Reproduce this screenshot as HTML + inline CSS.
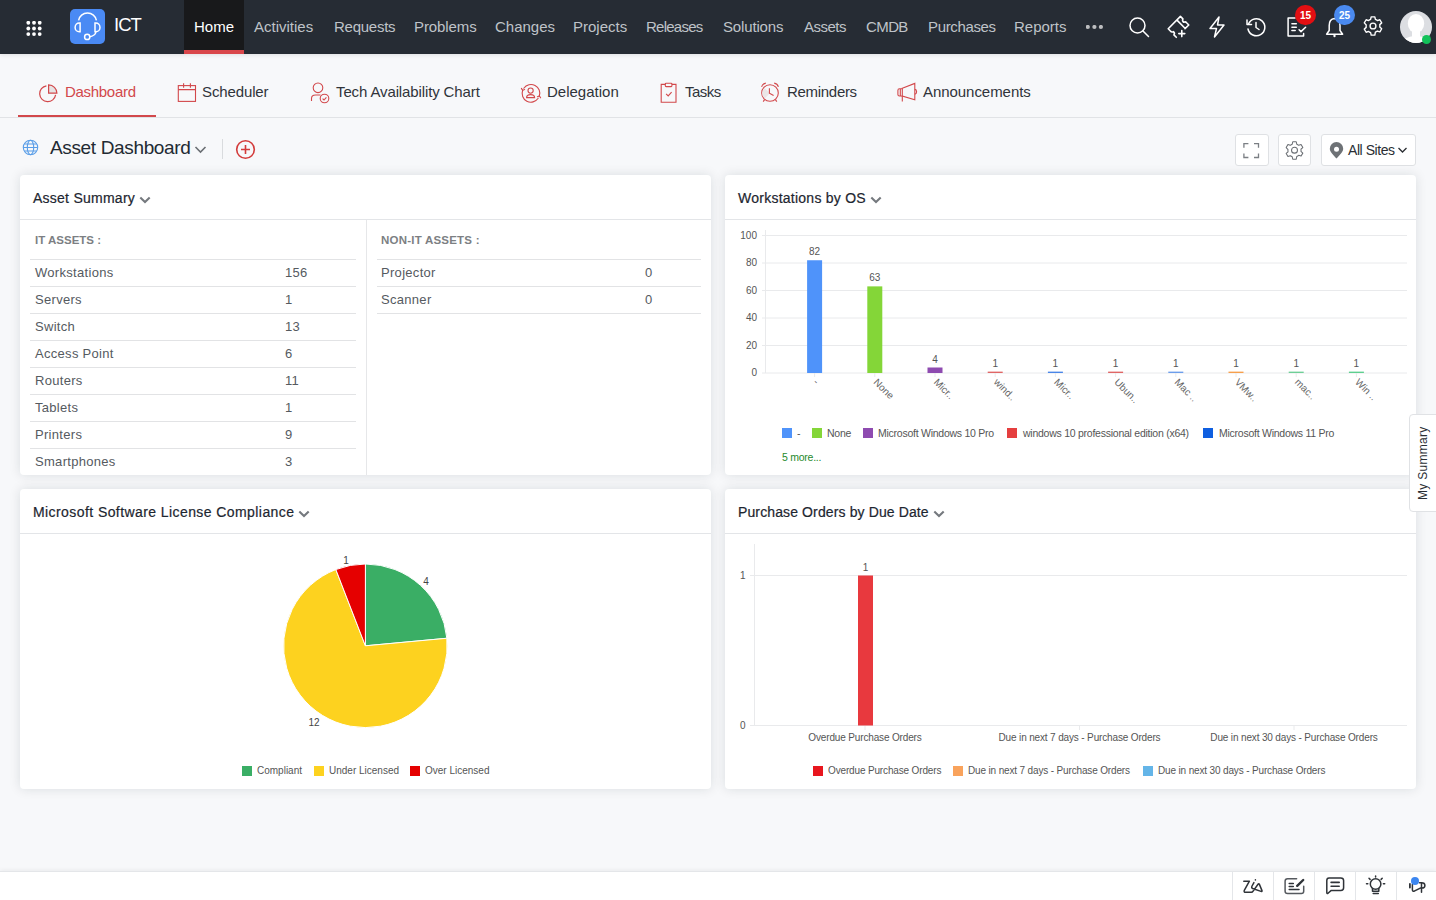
<!DOCTYPE html>
<html><head><meta charset="utf-8">
<style>
*{margin:0;padding:0;box-sizing:border-box}
html,body{width:1436px;height:900px;overflow:hidden;background:#f7f8fa;font-family:"Liberation Sans",sans-serif;position:relative}
.a{position:absolute;white-space:nowrap}
#top{position:absolute;left:0;top:0;width:1436px;height:54px;background:#262c34;box-shadow:0 1px 4px rgba(0,0,0,.10);z-index:2}
.nav{position:absolute;top:18px;font-size:15px;color:#bfc3c8;line-height:18px}
#home{position:absolute;left:184px;top:0;width:60px;height:54px;background:#18191b}
#home .bar{position:absolute;left:0;bottom:0;width:60px;height:4px;background:#d9474b}
.tab{position:absolute;top:83px;font-size:15px;color:#30343a;line-height:18px}
.card{position:absolute;background:#fff;border-radius:4px;box-shadow:0 0 12px rgba(20,30,40,.12)}
.card .hd{position:absolute;left:0;top:44px;width:100%;height:1px;background:#e3e5e8}
.ct{position:absolute;left:13px;top:15px;font-size:14px;color:#1d2630;line-height:16px;font-weight:normal;-webkit-text-stroke:0.2px #1d2630;letter-spacing:0.25px}
.row{position:absolute;font-size:13px;color:#555a5f;line-height:15px;letter-spacing:0.3px}
.ln{position:absolute;height:1px;background:#e2e3e5}
.ax{position:absolute;font-size:10px;color:#555;line-height:11px}
.lg{position:absolute;font-size:10px;color:#555;line-height:12px}
.lg2{position:absolute;font-size:10.5px;color:#555;line-height:12px;letter-spacing:-0.25px}
.sq{position:absolute;width:10px;height:10px}
</style></head><body>
<div id="top">
  <svg class="a" style="left:26px;top:21px" width="16" height="16" viewBox="0 0 16 16" fill="#fff"><circle cx="2.3" cy="1.8" r="1.9"/><circle cx="8" cy="1.8" r="1.9"/><circle cx="13.7" cy="1.8" r="1.9"/><circle cx="2.3" cy="7.5" r="1.9"/><circle cx="8" cy="7.5" r="1.9"/><circle cx="13.7" cy="7.5" r="1.9"/><circle cx="2.3" cy="13.1" r="1.9"/><circle cx="8" cy="13.1" r="1.9"/><circle cx="13.7" cy="13.1" r="1.9"/></svg>
  <div class="a" style="left:70px;top:9px;width:35px;height:35px;background:#4a8af4;border-radius:5px"></div>
  <svg class="a" style="left:70px;top:9px" width="35" height="35" viewBox="0 0 35 35" fill="none" stroke="#fff" stroke-width="1.5">
    <path d="M8.6 11.3 A9 8.6 0 0 1 26.4 11.3"/>
    <path d="M10.1 14.1 H9.3 a4.2 4.3 0 0 0 0 8.6 H10.1 Z"/>
    <path d="M25 14.1 H25.8 a4.2 4.3 0 0 1 0 8.6 H25 Z"/>
    <path d="M26 22.5 Q25.5 26.6 19.8 27.8"/>
    <circle cx="17.2" cy="27.9" r="2.6"/>
  </svg>
  <div class="a" style="left:114px;top:14px;font-size:18.5px;color:#fff;line-height:22px;letter-spacing:-1px">ICT</div>
  <div id="home"><div class="bar"></div></div>
  <div class="nav" style="left:194px;color:#fff">Home</div>
  <div class="nav" style="left:254px">Activities</div>
  <div class="nav" style="left:334px;letter-spacing:-0.25px">Requests</div>
  <div class="nav" style="left:414px;letter-spacing:-0.1px">Problems</div>
  <div class="nav" style="left:495px">Changes</div>
  <div class="nav" style="left:573px">Projects</div>
  <div class="nav" style="left:646px;letter-spacing:-0.75px">Releases</div>
  <div class="nav" style="left:723px;letter-spacing:-0.15px">Solutions</div>
  <div class="nav" style="left:804px;letter-spacing:-0.5px">Assets</div>
  <div class="nav" style="left:866px;letter-spacing:-0.6px">CMDB</div>
  <div class="nav" style="left:928px;letter-spacing:-0.35px">Purchases</div>
  <div class="nav" style="left:1014px">Reports</div>
  <svg class="a" style="left:1086px;top:25px" width="18" height="5" viewBox="0 0 18 5" fill="#bcbdbf"><circle cx="1.8" cy="2" r="2.1"/><circle cx="8.4" cy="2" r="2.1"/><circle cx="14.9" cy="2" r="2.1"/></svg>
  <!-- icons -->
  <svg class="a" style="left:1128px;top:16px" width="22" height="22" viewBox="0 0 22 22" fill="none" stroke="#fff" stroke-width="1.5" stroke-linecap="round"><circle cx="9.5" cy="9.5" r="7.5"/><path d="M15 15 L20.5 20.5"/></svg>
  <svg class="a" style="left:1160px;top:8px" width="40" height="36" viewBox="0 0 40 36" fill="none" stroke="#fff" stroke-width="1.6" stroke-linejoin="round" stroke-linecap="round"><path d="M16.3 29.3 L13.9 26.9 Q15.2 25 13.4 23.6 Q11.6 24.6 10.4 23 L8.2 20.8 L20.4 8.4 L22.9 10.9 Q21.9 12.9 23.7 14.3 Q25.5 13.3 26.6 14.8 L28.8 17 L25 20.6 M17.2 12.4 L25 20.2 M18.8 25.6 H24.8 M21.8 22.6 V28.6"/></svg>
  <svg class="a" style="left:1208px;top:16px" width="18" height="22" viewBox="0 0 18 22" fill="none" stroke="#fff" stroke-width="1.5" stroke-linejoin="round"><path d="M11 1 L2 12.5 H8.5 L6.5 21 L16 9 H9.5 Z"/></svg>
  <svg class="a" style="left:1245px;top:16px" width="22" height="22" viewBox="0 0 22 22" fill="none" stroke="#fff" stroke-width="1.5" stroke-linecap="round" stroke-linejoin="round"><path d="M3.5 8 A8.5 8.5 0 1 1 3 13"/><path d="M2 4 v4.5 h4.5"/><path d="M11 6.5 V11.5 L14 13.5"/></svg>
  <svg class="a" style="left:1286px;top:16px" width="22" height="22" viewBox="0 0 22 22" fill="none" stroke="#fff" stroke-width="1.5" stroke-linecap="round" stroke-linejoin="round"><path d="M9 2 H2.1 V20 H17.6 V17.6"/><path d="M5.9 7.8 H10.3 M5.9 11.2 H10.3 M5.9 14.5 H9.2"/><path d="M13.1 13.8 L15 15.6 L19.6 11.2"/></svg>
  <div class="a" style="left:1295px;top:5px;width:21px;height:20px;border-radius:10px;background:#e30f12;color:#fff;font-size:10px;font-weight:bold;text-align:center;line-height:22px">15</div>
  <svg class="a" style="left:1325px;top:16px" width="20" height="23" viewBox="0 0 20 23" fill="none" stroke="#fff" stroke-width="1.5" stroke-linecap="round" stroke-linejoin="round"><path d="M9.5 2.5 Q4.2 3 4.2 9.5 V14.5 L1.6 18.2 H17.6 L15 14.5 V9.5 Q15 3 9.5 2.5"/><path d="M9.5 19.6 V20.2" stroke-width="2.2"/></svg>
  <div class="a" style="left:1334px;top:5px;width:21px;height:20px;border-radius:10px;background:#4a8af0;color:#fff;font-size:10px;font-weight:bold;text-align:center;line-height:22px">25</div>
  <svg class="a" style="left:1362px;top:15px" width="22" height="22" viewBox="0 0 24 24" fill="none" stroke="#fff" stroke-width="1.5" stroke-linejoin="round"><circle cx="12" cy="12" r="3.2"/><path d="M10 2 h4 l.6 2.8 a8 8 0 0 1 2.2 1.3 l2.7-.9 2 3.4-2.1 1.9 a8 8 0 0 1 0 2.6 l2.1 1.9-2 3.4-2.7-.9 a8 8 0 0 1-2.2 1.3 L14 22 h-4 l-.6-2.8 a8 8 0 0 1-2.2-1.3 l-2.7.9-2-3.4 2.1-1.9 a8 8 0 0 1 0-2.6 L2.5 8.6l2-3.4 2.7.9 a8 8 0 0 1 2.2-1.3 Z"/></svg>
  <svg class="a" style="left:1400px;top:11px" width="32" height="32" viewBox="0 0 32 32"><defs><clipPath id="av"><circle cx="16" cy="16" r="16"/></clipPath></defs><g clip-path="url(#av)"><rect width="32" height="32" fill="#dcdee2"/><ellipse cx="16" cy="12.5" rx="8.2" ry="9.5" fill="#fff"/><rect x="12" y="18" width="8" height="8" fill="#fff"/><ellipse cx="16" cy="35" rx="16" ry="10" fill="#fff"/></g></svg>
  <div class="a" style="left:1422px;top:35px;width:9px;height:9px;border-radius:5px;background:#12c25a"></div>
</div>

<!-- sub tabs -->
<div class="a" style="left:0;top:117px;width:1436px;height:1px;background:#e1e3e6"></div>
<div class="a" style="left:18px;top:115px;width:138px;height:2px;background:#d2484b"></div>
<svg class="a" style="left:39px;top:84px" width="20" height="20" viewBox="0 0 20 20" fill="none" stroke="#d2484b" stroke-width="1.2"><path d="M7.4 1.8 A8 8 0 1 0 16.6 10.9"/><path d="M9.6 0.9 V9.2 H17.9 A8.3 8.3 0 0 0 9.6 0.9 Z" fill="#e6e3e3"/></svg>
<div class="tab" style="left:65px;color:#d2484b;letter-spacing:-0.3px">Dashboard</div>
<svg class="a" style="left:177px;top:83px" width="20" height="20" viewBox="0 0 20 20" fill="none" stroke="#d2484b" stroke-width="1.1"><rect x="1.3" y="2.6" width="17.2" height="15.8"/><path d="M1.3 6.6 H18.5 M6.6 0.3 V4.8 M13.4 0.3 V4.8"/></svg>
<div class="tab" style="left:202px;letter-spacing:-0.12px">Scheduler</div>
<svg class="a" style="left:309px;top:81px" width="22" height="24" viewBox="0 0 22 24" fill="none" stroke="#d2484b" stroke-width="1.1"><circle cx="9" cy="6.8" r="4.8"/><path d="M2.5 20 V17.5 Q2.5 14 6.5 14 H11.5"/><circle cx="15.5" cy="17.5" r="4.3"/><path d="M13.6 17.6 L15 19 L17.4 16.3"/></svg>
<div class="tab" style="left:336px;letter-spacing:-0.12px">Tech Availability Chart</div>
<svg class="a" style="left:519px;top:82px" width="24" height="24" viewBox="0 0 24 24" fill="none" stroke="#d2484b" stroke-width="1.1" stroke-linecap="round"><path d="M4.8 6.2 A8.8 8.8 0 0 1 20.3 14.2"/><path d="M19.2 16.3 A8.8 8.8 0 0 1 3.7 8.2"/><path d="M2.4 6.4 L3.6 8.4 L5.6 7.6 M21.6 15.8 L20.4 14 L18.4 14.8"/><circle cx="11.6" cy="8.6" r="2.6"/><path d="M7.6 15.6 Q7.6 12.6 11.6 12.6 Q15.6 12.6 15.6 15.6 Z"/></svg>
<div class="tab" style="left:547px">Delegation</div>
<svg class="a" style="left:660px;top:82px" width="17" height="22" viewBox="0 0 17 22" fill="none" stroke="#d2484b" stroke-width="1.1"><path d="M5.3 2.4 H1.2 V20.3 H16 V2.4 H11.9"/><rect x="5.3" y="1.2" width="6.6" height="3.4" rx="0.8"/><path d="M6.1 11.9 L8.2 13.9 L11.6 10.2"/></svg>
<div class="tab" style="left:685px;letter-spacing:-0.5px">Tasks</div>
<svg class="a" style="left:759px;top:82px" width="22" height="22" viewBox="0 0 22 22" fill="none" stroke="#d2484b" stroke-width="1.1"><circle cx="11" cy="11" r="8.3" /><path d="M5.8 16.5 A7 7 0 0 1 5.3 6 L11 11 Z" fill="#ebe6e6" stroke="none"/><path d="M10.4 6.3 V11.2 L14.6 13.6 M2.6 4.8 Q3.6 1.6 6.8 1.1 M19.4 4.8 Q18.4 1.6 15.2 1.1 M5.6 17.6 L4.2 19.6 M16.4 17.6 L17.8 19.6"/></svg>
<div class="tab" style="left:787px;letter-spacing:-0.3px">Reminders</div>
<svg class="a" style="left:896px;top:82px" width="22" height="22" viewBox="0 0 22 22" fill="none" stroke="#d2484b" stroke-width="1.1"><path d="M6.3 6.2 L18.8 1.4 V17.8 L6.3 14 Z"/><path d="M6.3 6.8 H3.4 Q1.9 6.8 1.9 8.4 V12.4 Q1.9 14 3.4 14 H6.3 M6.3 14 V19.4 M18.8 7.4 Q20.6 7.6 20.6 9.8 Q20.6 11.8 18.8 12.2 M4.3 7 V13.8"/></svg>
<div class="tab" style="left:923px;letter-spacing:-0.05px">Announcements</div>

<!-- title row -->
<svg class="a" style="left:22px;top:139px" width="17" height="17" viewBox="0 0 17 17" fill="none" stroke="#5a9ee8" stroke-width="1.1"><circle cx="8.5" cy="8.5" r="7.2"/><ellipse cx="8.5" cy="8.5" rx="3.2" ry="7.2"/><path d="M1.3 8.5 H15.7 M2.4 5 H14.6 M2.4 12 H14.6"/></svg>
<div class="a" style="left:50px;top:137px;font-size:19px;color:#222a33;line-height:22px;letter-spacing:-0.35px">Asset Dashboard</div>
<svg class="a" style="left:194px;top:145px" width="13" height="9" viewBox="0 0 13 9" fill="none" stroke="#6b6f74" stroke-width="1.6"><path d="M1.5 2 L6.5 7 L11.5 2"/></svg>
<div class="a" style="left:222px;top:139px;width:1px;height:20px;background:#d9dbde"></div>
<svg class="a" style="left:235px;top:139px" width="21" height="21" viewBox="0 0 21 21" fill="none" stroke="#d33b3b" stroke-width="1.6"><circle cx="10.5" cy="10.5" r="8.8"/><path d="M10.5 6 V15 M6 10.5 H15"/></svg>

<div class="a" style="left:1235px;top:134px;width:34px;height:32px;background:#fff;border:1px solid #dfe1e4;border-radius:3px"></div>
<svg class="a" style="left:1242px;top:142px" width="18" height="18" viewBox="0 0 18 18" fill="none" stroke="#7b7f84" stroke-width="1.3"><path d="M1.9 5.7 V1.6 H6.4 M12 1.6 H16.5 V5.7 M16.5 11.4 V15.5 H12 M6.4 15.5 H1.9 V11.4"/></svg>
<div class="a" style="left:1278px;top:134px;width:33px;height:32px;background:#fff;border:1px solid #dfe1e4;border-radius:3px"></div>
<svg class="a" style="left:1284px;top:140px" width="21" height="21" viewBox="0 0 24 24" fill="none" stroke="#6a6e73" stroke-width="1.2" stroke-linejoin="round"><circle cx="12" cy="11.6" r="3.4"/><path d="M10 2 h4 l.6 2.8 a8 8 0 0 1 2.2 1.3 l2.7-.9 2 3.4-2.1 1.9 a8 8 0 0 1 0 2.6 l2.1 1.9-2 3.4-2.7-.9 a8 8 0 0 1-2.2 1.3 L14 22 h-4 l-.6-2.8 a8 8 0 0 1-2.2-1.3 l-2.7.9-2-3.4 2.1-1.9 a8 8 0 0 1 0-2.6 L2.5 8.6l2-3.4 2.7.9 a8 8 0 0 1 2.2-1.3 Z"/></svg>
<div class="a" style="left:1321px;top:134px;width:95px;height:32px;background:#fff;border:1px solid #dfe1e4;border-radius:3px"></div>
<svg class="a" style="left:1329px;top:141px" width="15" height="19" viewBox="0 0 15 19"><path d="M7.5 1 A6.7 6.7 0 0 1 14.2 7.7 C14.2 11.2 10 14.5 7.5 17.5 C5 14.5 0.8 11.2 0.8 7.7 A6.7 6.7 0 0 1 7.5 1 Z" fill="#6e7276"/><circle cx="7.5" cy="8.2" r="2.5" fill="#fff"/></svg>
<div class="a" style="left:1348px;top:142px;font-size:14px;color:#2a2e33;line-height:16px;letter-spacing:-0.45px">All Sites</div>
<svg class="a" style="left:1397px;top:146px" width="11" height="8" viewBox="0 0 11 8" fill="none" stroke="#2a2e33" stroke-width="1.3"><path d="M1.5 2 L5.5 6 L9.5 2"/></svg>

<!-- card 1 -->
<div class="card" style="left:20px;top:175px;width:691px;height:300px">
  <div class="hd"></div>
  <div class="ct">Asset Summary</div>
  <svg class="a" style="left:119px;top:21px" width="12" height="8" viewBox="0 0 12 8" fill="none" stroke="#75797e" stroke-width="2.1"><path d="M1.3 1.6 L6 6.1 L10.7 1.6"/></svg>
  <div class="a" style="left:346px;top:45px;width:1px;height:255px;background:#e6e7e9"></div>
</div>
<div class="a" style="left:35px;top:234px;font-size:11.5px;font-weight:bold;color:#7c7f83;line-height:13px">IT ASSETS :</div>
<div class="a" style="left:381px;top:234px;font-size:11.5px;font-weight:bold;color:#7c7f83;line-height:13px;letter-spacing:0.22px">NON-IT ASSETS :</div>
<div class="ln" style="left:30px;top:259px;width:326px"></div>
<div class="row" style="left:35px;top:265px">Workstations</div>
<div class="row" style="left:285px;top:265px">156</div>
<div class="ln" style="left:30px;top:286px;width:326px"></div>
<div class="row" style="left:35px;top:292px">Servers</div>
<div class="row" style="left:285px;top:292px">1</div>
<div class="ln" style="left:30px;top:313px;width:326px"></div>
<div class="row" style="left:35px;top:319px">Switch</div>
<div class="row" style="left:285px;top:319px">13</div>
<div class="ln" style="left:30px;top:340px;width:326px"></div>
<div class="row" style="left:35px;top:346px">Access Point</div>
<div class="row" style="left:285px;top:346px">6</div>
<div class="ln" style="left:30px;top:367px;width:326px"></div>
<div class="row" style="left:35px;top:373px">Routers</div>
<div class="row" style="left:285px;top:373px">11</div>
<div class="ln" style="left:30px;top:394px;width:326px"></div>
<div class="row" style="left:35px;top:400px">Tablets</div>
<div class="row" style="left:285px;top:400px">1</div>
<div class="ln" style="left:30px;top:421px;width:326px"></div>
<div class="row" style="left:35px;top:427px">Printers</div>
<div class="row" style="left:285px;top:427px">9</div>
<div class="ln" style="left:30px;top:448px;width:326px"></div>
<div class="row" style="left:35px;top:454px">Smartphones</div>
<div class="row" style="left:285px;top:454px">3</div>
<div class="ln" style="left:377px;top:259px;width:324px"></div>
<div class="row" style="left:381px;top:265px">Projector</div>
<div class="row" style="left:645px;top:265px">0</div>
<div class="ln" style="left:377px;top:286px;width:324px"></div>
<div class="row" style="left:381px;top:292px">Scanner</div>
<div class="row" style="left:645px;top:292px">0</div>
<div class="ln" style="left:377px;top:313px;width:324px"></div>

<!-- card 2 -->
<div class="card" style="left:725px;top:175px;width:691px;height:300px">
  <div class="hd"></div>
  <div class="ct">Workstations by OS</div>
  <svg class="a" style="left:145px;top:21px" width="12" height="8" viewBox="0 0 12 8" fill="none" stroke="#75797e" stroke-width="2.1"><path d="M1.3 1.6 L6 6.1 L10.7 1.6"/></svg>
</div>
<svg class="a" style="left:725px;top:220px" width="691" height="255" viewBox="725 220 691 255">
<line x1="762" y1="373.0" x2="1407" y2="373.0" stroke="#e9eaec" stroke-width="1"/>
<line x1="762" y1="345.5" x2="1407" y2="345.5" stroke="#e9eaec" stroke-width="1"/>
<line x1="762" y1="318.0" x2="1407" y2="318.0" stroke="#e9eaec" stroke-width="1"/>
<line x1="762" y1="290.5" x2="1407" y2="290.5" stroke="#e9eaec" stroke-width="1"/>
<line x1="762" y1="263.0" x2="1407" y2="263.0" stroke="#e9eaec" stroke-width="1"/>
<line x1="762" y1="235.5" x2="1407" y2="235.5" stroke="#e9eaec" stroke-width="1"/>
<line x1="765.5" y1="230" x2="765.5" y2="373" stroke="#e9eaec" stroke-width="1"/>
<rect x="807.1" y="260.25" width="15" height="112.75" fill="#4f93fa"/>
<text x="814.6" y="255.25" font-size="10" fill="#555" text-anchor="middle" font-family="Liberation Sans">82</text>
<line x1="814.6" y1="373" x2="814.6" y2="377" stroke="#e9eaec"/>
<text x="814.6" y="381" font-size="10" fill="#666" transform="rotate(45 814.6 381)" font-family="Liberation Sans" dominant-baseline="middle">-</text>
<rect x="867.3000000000001" y="286.375" width="15" height="86.625" fill="#84d638"/>
<text x="874.8000000000001" y="281.375" font-size="10" fill="#555" text-anchor="middle" font-family="Liberation Sans">63</text>
<line x1="874.8000000000001" y1="373" x2="874.8000000000001" y2="377" stroke="#e9eaec"/>
<text x="874.8000000000001" y="381" font-size="10" fill="#666" transform="rotate(45 874.8000000000001 381)" font-family="Liberation Sans" dominant-baseline="middle">None</text>
<rect x="927.5" y="367.5" width="15" height="5.5" fill="#8e4bb0"/>
<text x="935.0" y="362.5" font-size="10" fill="#555" text-anchor="middle" font-family="Liberation Sans">4</text>
<line x1="935.0" y1="373" x2="935.0" y2="377" stroke="#e9eaec"/>
<text x="935.0" y="381" font-size="10" fill="#666" transform="rotate(45 935.0 381)" font-family="Liberation Sans" dominant-baseline="middle">Micr..</text>
<rect x="987.7" y="371.625" width="15" height="1.375" fill="#e06666"/>
<text x="995.2" y="366.625" font-size="10" fill="#555" text-anchor="middle" font-family="Liberation Sans">1</text>
<line x1="995.2" y1="373" x2="995.2" y2="377" stroke="#e9eaec"/>
<text x="995.2" y="381" font-size="10" fill="#666" transform="rotate(45 995.2 381)" font-family="Liberation Sans" dominant-baseline="middle">wind..</text>
<rect x="1047.9" y="371.625" width="15" height="1.375" fill="#4a86e8"/>
<text x="1055.4" y="366.625" font-size="10" fill="#555" text-anchor="middle" font-family="Liberation Sans">1</text>
<line x1="1055.4" y1="373" x2="1055.4" y2="377" stroke="#e9eaec"/>
<text x="1055.4" y="381" font-size="10" fill="#666" transform="rotate(45 1055.4 381)" font-family="Liberation Sans" dominant-baseline="middle">Micr..</text>
<rect x="1108.1" y="371.625" width="15" height="1.375" fill="#e06666"/>
<text x="1115.6" y="366.625" font-size="10" fill="#555" text-anchor="middle" font-family="Liberation Sans">1</text>
<line x1="1115.6" y1="373" x2="1115.6" y2="377" stroke="#e9eaec"/>
<text x="1115.6" y="381" font-size="10" fill="#666" transform="rotate(45 1115.6 381)" font-family="Liberation Sans" dominant-baseline="middle">Ubun..</text>
<rect x="1168.3000000000002" y="371.625" width="15" height="1.375" fill="#6d9eeb"/>
<text x="1175.8000000000002" y="366.625" font-size="10" fill="#555" text-anchor="middle" font-family="Liberation Sans">1</text>
<line x1="1175.8000000000002" y1="373" x2="1175.8000000000002" y2="377" stroke="#e9eaec"/>
<text x="1175.8000000000002" y="381" font-size="10" fill="#666" transform="rotate(45 1175.8000000000002 381)" font-family="Liberation Sans" dominant-baseline="middle">Mac ..</text>
<rect x="1228.5" y="371.625" width="15" height="1.375" fill="#f6a04d"/>
<text x="1236.0" y="366.625" font-size="10" fill="#555" text-anchor="middle" font-family="Liberation Sans">1</text>
<line x1="1236.0" y1="373" x2="1236.0" y2="377" stroke="#e9eaec"/>
<text x="1236.0" y="381" font-size="10" fill="#666" transform="rotate(45 1236.0 381)" font-family="Liberation Sans" dominant-baseline="middle">VMw..</text>
<rect x="1288.7" y="371.625" width="15" height="1.375" fill="#6fcf97"/>
<text x="1296.2" y="366.625" font-size="10" fill="#555" text-anchor="middle" font-family="Liberation Sans">1</text>
<line x1="1296.2" y1="373" x2="1296.2" y2="377" stroke="#e9eaec"/>
<text x="1296.2" y="381" font-size="10" fill="#666" transform="rotate(45 1296.2 381)" font-family="Liberation Sans" dominant-baseline="middle">mac..</text>
<rect x="1348.9" y="371.625" width="15" height="1.375" fill="#5ecf8f"/>
<text x="1356.4" y="366.625" font-size="10" fill="#555" text-anchor="middle" font-family="Liberation Sans">1</text>
<line x1="1356.4" y1="373" x2="1356.4" y2="377" stroke="#e9eaec"/>
<text x="1356.4" y="381" font-size="10" fill="#666" transform="rotate(45 1356.4 381)" font-family="Liberation Sans" dominant-baseline="middle">Win ..</text>
</svg>
<div class="ax" style="right:679px;top:367.0px">0</div>
<div class="ax" style="right:679px;top:339.5px">20</div>
<div class="ax" style="right:679px;top:312.0px">40</div>
<div class="ax" style="right:679px;top:284.5px">60</div>
<div class="ax" style="right:679px;top:257.0px">80</div>
<div class="ax" style="right:679px;top:229.5px">100</div>
<div class="sq" style="left:782px;top:428px;background:#4f93fa"></div>
<div class="lg2" style="left:797px;top:427px">-</div>
<div class="sq" style="left:812px;top:428px;background:#84d638"></div>
<div class="lg2" style="left:827px;top:427px">None</div>
<div class="sq" style="left:863px;top:428px;background:#8e4bb0"></div>
<div class="lg2" style="left:878px;top:427px">Microsoft Windows 10 Pro</div>
<div class="sq" style="left:1007px;top:428px;background:#e53f3f"></div>
<div class="lg2" style="left:1023px;top:427px">windows 10 professional edition (x64)</div>
<div class="sq" style="left:1203px;top:428px;background:#0f5fe0"></div>
<div class="lg2" style="left:1219px;top:427px">Microsoft Windows 11 Pro</div>
<div class="lg2" style="left:782px;top:451px;color:#1f8a2c">5 more...</div>

<!-- card 3 -->
<div class="card" style="left:20px;top:489px;width:691px;height:300px">
  <div class="hd"></div>
  <div class="ct" style="letter-spacing:0.42px">Microsoft Software License Compliance</div>
  <svg class="a" style="left:278px;top:21px" width="12" height="8" viewBox="0 0 12 8" fill="none" stroke="#75797e" stroke-width="2.1"><path d="M1.3 1.6 L6 6.1 L10.7 1.6"/></svg>
</div>
<svg class="a" style="left:20px;top:534px" width="691" height="255" viewBox="20 534 691 255">
<path d="M365.4 645.8 L365.40 564.00 A81.8 81.8 0 0 1 446.85 638.25 Z" fill="#3aae65" stroke="#fff" stroke-width="1"/>
<path d="M365.4 645.8 L446.85 638.25 A81.8 81.8 0 1 1 335.85 569.52 Z" fill="#fdd21f" stroke="#fff" stroke-width="1"/>
<path d="M365.4 645.8 L335.85 569.52 A81.8 81.8 0 0 1 365.40 564.00 Z" fill="#e50000" stroke="#fff" stroke-width="1"/>
<text x="426" y="585" font-size="10" fill="#444" text-anchor="middle" font-family="Liberation Sans">4</text>
<text x="346" y="564" font-size="10" fill="#444" text-anchor="middle" font-family="Liberation Sans">1</text>
<text x="314" y="726" font-size="10" fill="#444" text-anchor="middle" font-family="Liberation Sans">12</text>
</svg>
<div class="sq" style="left:242px;top:766px;background:#3aae65"></div>
<div class="lg" style="left:257px;top:765px">Compliant</div>
<div class="sq" style="left:314px;top:766px;background:#fdd21f"></div>
<div class="lg" style="left:329px;top:765px">Under Licensed</div>
<div class="sq" style="left:410px;top:766px;background:#e50000"></div>
<div class="lg" style="left:425px;top:765px">Over Licensed</div>

<!-- card 4 -->
<div class="card" style="left:725px;top:489px;width:691px;height:300px">
  <div class="hd"></div>
  <div class="ct" style="letter-spacing:0.12px">Purchase Orders by Due Date</div>
  <svg class="a" style="left:208px;top:21px" width="12" height="8" viewBox="0 0 12 8" fill="none" stroke="#75797e" stroke-width="2.1"><path d="M1.3 1.6 L6 6.1 L10.7 1.6"/></svg>
</div>
<svg class="a" style="left:725px;top:534px" width="691" height="255" viewBox="725 534 691 255">
<line x1="750" y1="575.5" x2="1407" y2="575.5" stroke="#e9eaec"/>
<line x1="750" y1="725.5" x2="1407" y2="725.5" stroke="#e9eaec"/>
<line x1="754.5" y1="544" x2="754.5" y2="726" stroke="#e9eaec"/>
<rect x="858" y="575.5" width="15" height="150" fill="#e8393e"/>
<text x="865.5" y="571" font-size="10" fill="#555" text-anchor="middle" font-family="Liberation Sans">1</text>
<line x1="865" y1="726" x2="865" y2="730" stroke="#e9eaec"/>
<text x="865" y="741" font-size="10" fill="#555" text-anchor="middle" font-family="Liberation Sans" letter-spacing="-0.15">Overdue Purchase Orders</text>
<line x1="1079.5" y1="726" x2="1079.5" y2="730" stroke="#e9eaec"/>
<text x="1079.5" y="741" font-size="10" fill="#555" text-anchor="middle" font-family="Liberation Sans" letter-spacing="-0.15">Due in next 7 days - Purchase Orders</text>
<line x1="1294" y1="726" x2="1294" y2="730" stroke="#e9eaec"/>
<text x="1294" y="741" font-size="10" fill="#555" text-anchor="middle" font-family="Liberation Sans" letter-spacing="-0.15">Due in next 30 days - Purchase Orders</text>
</svg>
<div class="ax" style="left:740px;top:570px">1</div>
<div class="ax" style="left:740px;top:720px">0</div>
<div class="sq" style="left:813px;top:766px;background:#e8161e"></div>
<div class="lg" style="left:828px;top:765px;letter-spacing:-0.15px">Overdue Purchase Orders</div>
<div class="sq" style="left:953px;top:766px;background:#f9a35c"></div>
<div class="lg" style="left:968px;top:765px;letter-spacing:-0.15px">Due in next 7 days - Purchase Orders</div>
<div class="sq" style="left:1143px;top:766px;background:#64b5e8"></div>
<div class="lg" style="left:1158px;top:765px;letter-spacing:-0.15px">Due in next 30 days - Purchase Orders</div>

<!-- my summary -->
<div class="a" style="left:1409px;top:414px;width:30px;height:98px;background:#fff;border:1px solid #e0e2e5;border-radius:4px 0 0 4px"></div>
<div class="a" style="left:1416px;top:500px;font-size:12px;color:#2a2e33;line-height:14px;letter-spacing:0.3px;transform:rotate(-90deg);transform-origin:0 0">My Summary</div>

<!-- footer -->
<div class="a" style="left:0;top:871px;width:1436px;height:29px;background:#fff;border-top:1px solid #e4e6e9;box-shadow:0 -1px 4px rgba(0,0,0,.06)"></div>
<div class="a" style="left:1232px;top:872px;width:1px;height:28px;background:#e4e6e9"></div>
<div class="a" style="left:1273px;top:872px;width:1px;height:28px;background:#e4e6e9"></div>
<div class="a" style="left:1314px;top:872px;width:1px;height:28px;background:#e4e6e9"></div>
<div class="a" style="left:1355px;top:872px;width:1px;height:28px;background:#e4e6e9"></div>
<div class="a" style="left:1396px;top:872px;width:1px;height:28px;background:#e4e6e9"></div>
<svg class="a" style="left:1236px;top:872px" width="200" height="28" viewBox="0 0 200 28" fill="none" stroke="#2f3338" stroke-width="1.5" stroke-linecap="round" stroke-linejoin="round">
<path d="M7.8 9.2 H13.4 L8.3 18.3 Q7.6 20.3 9.6 20.3 H15.3 Q16.4 20.3 17.1 19.1 L22.2 12 Q22.8 11.3 23.3 12.1 L26 18.6 Q26.2 19.8 25 19.4 L16.6 16.5 Q15.2 15.7 15.8 14.5 L17.9 10.6"/>
<circle cx="19.4" cy="7.9" r="0.8" fill="#2f3338" stroke="none"/>
<path d="M60.6 6.8 H51.6 Q49.1 6.8 49.1 9.3 V19.3 Q49.1 21.6 51.6 21.6 H65.3 Q67.7 21.6 67.7 19.3 V14.3" stroke="#55595e"/>
<path d="M53.2 11.4 H57.3 M53.2 14.5 H57.3 M53.2 17.5 H63"/>
<path d="M61.2 13.8 L67.2 8" stroke-width="2.4"/>
<path d="M13 6 H8 M0 0" stroke="none"/>
<g transform="translate(80 0)">
<path d="M13 5.9 H24.8 Q27.6 5.9 27.6 8.6 V15.7 Q27.6 18.4 24.8 18.4 H15.3 L12 21.3 Q10.8 22 10.8 20.5 V8.6 Q10.8 5.9 13 5.9 Z"/>
<path d="M15.1 10.4 H23.2 M15.1 14.2 H23.2" stroke-width="1.6"/>
</g>
<g transform="translate(120 0)">
<circle cx="19.6" cy="12" r="5.3"/>
<path d="M16.5 16.6 V19.2 H22.8 V16.6 M17.2 21.5 H22.3 M19.6 4 V5 M13 6.3 L14.1 7.4 M26.2 6.3 L25.1 7.4 M10.5 11.7 H11.8 M27.4 11.7 H28.7"/>
</g>
<g transform="translate(160 0)">
<path d="M13.9 11.8 V15.6" stroke-width="1.8"/>
<path d="M16.4 12.4 V18 Q16.6 19.6 18.2 19.2 L25.3 15.6 M23.5 10.8 H25.6 Q28.9 10.8 28.9 13.5 Q28.9 16.1 25.8 16.1 M25.5 11 V20.3"/>
<circle cx="19" cy="8.9" r="4" fill="#3c86f0" stroke="none"/>
</g>
</svg>
</body></html>
